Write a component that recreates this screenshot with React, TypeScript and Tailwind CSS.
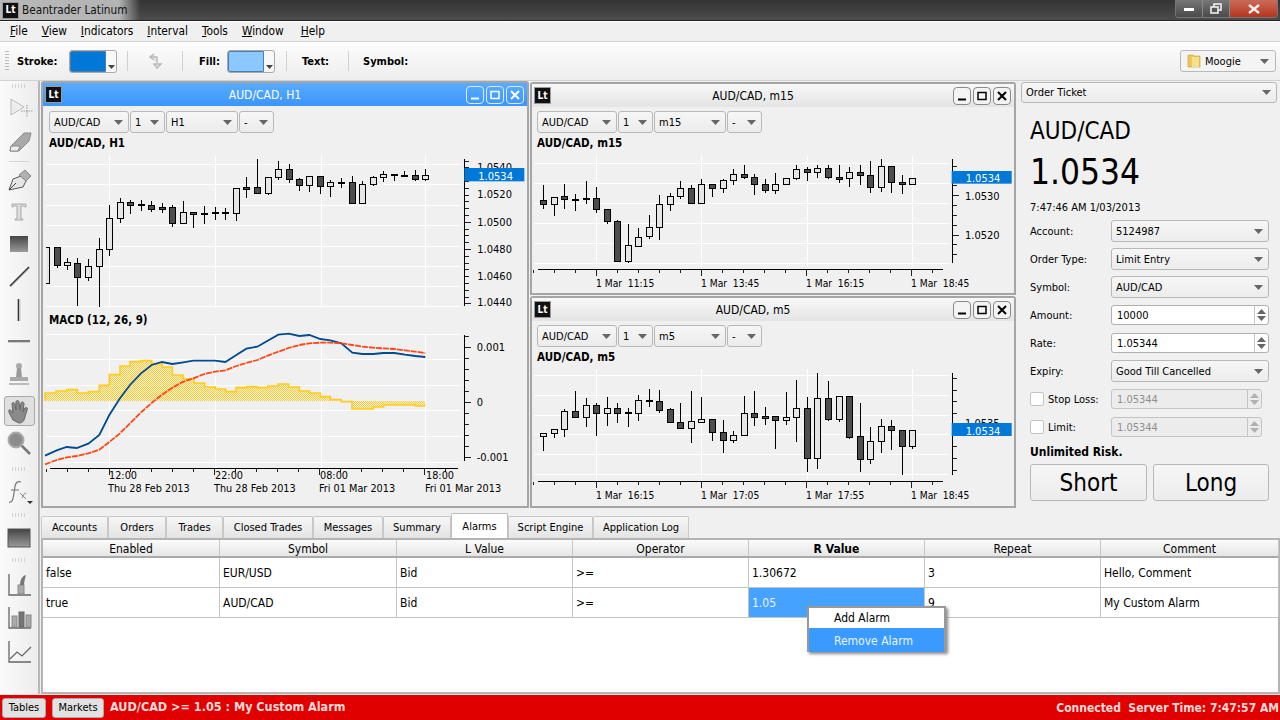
import type { ReactNode } from "react";

type Candle = [number, number, number, number, number, number];

// candle values are [x, high, low, bodyTop, bodyBottom, dark] in 3x chart units
const h1Candles: Candle[] = [
  [50, 292, 350, 292, 344, 1], [82, 322, 358, 337, 344, 0], [112, 322, 464, 338, 382, 1], [145, 324, 390, 347, 382, 0],
  [178, 262, 468, 296, 347, 0], [208, 163, 315, 203, 296, 0], [241, 142, 215, 157, 203, 0], [271, 147, 188, 157, 166, 1],
  [304, 148, 181, 163, 166, 1], [334, 150, 182, 164, 176, 1], [367, 156, 186, 172, 176, 1], [397, 163, 227, 172, 220, 1],
  [430, 150, 220, 187, 220, 0], [460, 183, 230, 187, 193, 1], [493, 166, 218, 190, 193, 1], [525, 168, 206, 187, 190, 1],
  [556, 170, 206, 187, 190, 1], [589, 115, 210, 115, 190, 0], [619, 78, 140, 112, 116, 1], [652, 24, 128, 112, 128, 1],
  [683, 78, 131, 82, 128, 0], [715, 30, 88, 58, 82, 0], [746, 40, 95, 58, 88, 1], [778, 80, 120, 88, 106, 1],
  [808, 76, 122, 79, 106, 0], [841, 78, 128, 79, 109, 1], [871, 88, 137, 97, 109, 0], [904, 82, 110, 96, 99, 1],
  [937, 75, 160, 97, 160, 1], [967, 90, 160, 103, 160, 0], [1000, 76, 106, 82, 103, 0], [1030, 60, 92, 73, 82, 0],
  [1063, 70, 90, 72, 76, 1], [1093, 60, 78, 76, 77, 1], [1126, 58, 90, 76, 86, 1], [1156, 55, 90, 76, 86, 0],
];

const m15Candles: Candle[] = [
  [40, 312, 383, 361, 373, 1], [73, 350, 405, 350, 373, 0], [103, 309, 383, 349, 358, 1], [136, 340, 390, 357, 358, 1],
  [169, 300, 368, 355, 358, 1], [199, 318, 395, 355, 388, 1], [232, 388, 428, 388, 424, 1], [262, 418, 542, 424, 542, 1],
  [295, 430, 545, 496, 542, 0], [325, 442, 497, 470, 497, 0], [358, 403, 475, 442, 469, 0], [388, 343, 476, 373, 442, 0],
  [421, 337, 390, 349, 373, 0], [451, 300, 353, 325, 349, 0], [484, 313, 368, 325, 368, 1], [514, 295, 368, 313, 368, 0],
  [547, 313, 348, 313, 325, 1], [580, 295, 335, 301, 325, 0], [610, 265, 312, 283, 301, 0], [643, 252, 295, 283, 292, 1],
  [673, 280, 342, 292, 313, 1], [706, 294, 335, 313, 331, 1], [736, 277, 338, 313, 331, 0], [769, 290, 313, 295, 313, 0],
  [799, 253, 298, 268, 295, 0], [832, 258, 300, 268, 277, 1], [862, 253, 290, 265, 277, 0], [895, 253, 295, 265, 292, 1],
  [928, 252, 305, 292, 296, 1], [958, 258, 318, 277, 295, 0], [991, 252, 312, 277, 286, 1], [1021, 240, 335, 286, 322, 1],
  [1054, 235, 332, 259, 322, 0], [1084, 259, 335, 259, 307, 1], [1117, 283, 338, 307, 313, 1], [1147, 295, 313, 295, 313, 0],
];

const m5Candles: Candle[] = [
  [40, 415, 465, 415, 424, 0], [73, 400, 426, 403, 415, 0], [103, 340, 422, 349, 403, 0], [136, 285, 365, 349, 365, 1],
  [169, 307, 392, 331, 365, 0], [199, 322, 420, 331, 353, 1], [232, 304, 390, 340, 353, 0], [262, 322, 382, 340, 353, 1],
  [295, 335, 392, 352, 355, 1], [325, 297, 375, 316, 355, 0], [358, 280, 332, 316, 319, 1], [388, 282, 350, 319, 344, 1],
  [421, 335, 382, 343, 382, 1], [451, 322, 400, 382, 400, 1], [484, 285, 440, 379, 400, 0], [514, 304, 380, 373, 380, 0],
  [547, 373, 434, 373, 412, 1], [580, 372, 470, 412, 436, 1], [610, 405, 440, 421, 436, 0], [643, 300, 421, 355, 421, 0],
  [673, 285, 390, 355, 367, 1], [706, 333, 386, 364, 368, 1], [736, 364, 458, 364, 376, 1], [769, 288, 386, 367, 376, 0],
  [799, 252, 437, 340, 367, 0], [832, 304, 527, 340, 488, 1], [862, 231, 518, 310, 488, 0], [895, 255, 376, 310, 373, 1],
  [928, 300, 378, 304, 373, 0], [958, 304, 428, 304, 425, 1], [991, 321, 528, 424, 493, 1], [1021, 393, 505, 439, 493, 0],
  [1054, 369, 470, 394, 439, 0], [1084, 373, 462, 394, 406, 1], [1117, 406, 536, 406, 454, 1], [1147, 406, 460, 406, 454, 0],
];

const histogram = [
  [15, 264], [48, 258], [80, 254], [112, 264], [145, 260], [178, 241], [208, 209], [240, 183], [270, 170], [303, 167],
  [335, 176], [366, 186], [397, 210], [430, 222], [462, 234], [494, 246], [526, 252], [557, 260], [588, 248], [620, 245],
  [652, 248], [683, 243], [715, 237], [746, 246], [778, 258], [809, 264], [841, 275], [871, 284], [904, 290], [936, 312],
  [967, 312], [1000, 306], [1031, 300], [1063, 300], [1095, 300], [1126, 303],
];

const macdLine = [
  [15, 452], [50, 436], [80, 426], [110, 429], [145, 416], [178, 390], [208, 330], [240, 280], [270, 240], [303, 205],
  [335, 180], [366, 171], [397, 177], [430, 172], [460, 167], [493, 167], [525, 167], [556, 171], [589, 150], [619, 131],
  [652, 125], [683, 107], [715, 89], [746, 86], [778, 93], [808, 90], [841, 102], [871, 106], [904, 115], [937, 143],
  [967, 147], [1000, 147], [1030, 144], [1063, 144], [1095, 149], [1126, 153], [1156, 156],
];

const signalLine = [
  [15, 478], [50, 465], [80, 457], [110, 453], [145, 445], [178, 434], [208, 411], [240, 385], [270, 355], [303, 322],
  [335, 294], [366, 269], [397, 248], [430, 230], [460, 220], [493, 207], [525, 200], [556, 196], [589, 183], [619, 174],
  [652, 165], [683, 152], [715, 140], [746, 129], [778, 120], [808, 115], [841, 113], [871, 113], [904, 115], [937, 120],
  [967, 125], [1000, 128], [1030, 130], [1063, 132], [1095, 136], [1126, 140], [1156, 144],
];

const range = (from: number, step: number, count: number) => Array.from({ length: count }, (_, i) => from + i * step);
const snap = (v: number) => Math.round(v) + 0.5;

function Candles({ data, ox, oy }: { data: Candle[]; ox: number; oy: number }) {
  return (
    <g shapeRendering="crispEdges">
      {data.map(([x, hi, lo, top, bot, dark]) => {
        const cx = snap(x / 3 + ox);
        const t = snap(top / 3 + oy);
        const b = Math.max(snap(bot / 3 + oy), t + 1);
        return (
          <g key={x}>
            <line x1={cx} x2={cx} y1={snap(hi / 3 + oy)} y2={snap(lo / 3 + oy)} stroke="#000" />
            <rect x={cx - 3} y={t} width={6} height={b - t} fill={dark ? "#4d4d4d" : "#e6e6e6"} stroke="#000" />
          </g>
        );
      })}
    </g>
  );
}

type ChartProps = {
  width: number;
  height: number;
  ox: number;
  oy: number;
  gridY: number[];
  gridX: number[];
  gridLeft: number;
  gridRight: number;
  gridTop: number;
  gridBottom: number;
  axisTop: number;
  axisBottom: number;
  axisX: number;
  ticks: number[];
  majors: number[];
  labels: [string, number][];
  labelX: number;
  badge?: number[];
  bottom?: { y: number; left: number; right: number; ticks: number[]; majors: number[] };
  children?: ReactNode;
};

function Chart(p: ChartProps) {
  const X = (v: number) => snap(v / 3 + p.ox);
  const Y = (v: number) => snap(v / 3 + p.oy);
  return (
    <svg width={p.width} height={p.height} className="block shrink-0 overflow-visible text-[11px] fill-black">
      <g shapeRendering="crispEdges">
        {p.gridY.map((y) => (
          <line key={y} x1={X(p.gridLeft)} x2={X(p.gridRight)} y1={Y(y)} y2={Y(y)} stroke="#fff" />
        ))}
        {p.gridX.map((x) => (
          <line key={x} x1={X(x)} x2={X(x)} y1={Y(p.gridTop)} y2={Y(p.gridBottom)} stroke="#fff" />
        ))}
        <line x1={X(p.axisX)} x2={X(p.axisX)} y1={Y(p.axisTop)} y2={Y(p.axisBottom)} stroke="#000" />
        {p.ticks.map((y) => (
          <line key={y} x1={X(p.axisX)} x2={X(p.axisX) + (p.majors.includes(y) ? 6 : 4)} y1={Y(y)} y2={Y(y)} stroke="#222" />
        ))}
        {p.bottom && (
          <>
            <line x1={X(p.bottom.left)} x2={X(p.bottom.right)} y1={Y(p.bottom.y)} y2={Y(p.bottom.y)} stroke="#000" />
            {p.bottom.ticks.map((x) => (
              <line key={x} x1={X(x)} x2={X(x)} y1={Y(p.bottom!.y)} y2={Y(p.bottom!.y) + (p.bottom!.majors.includes(x) ? 6 : 3)} stroke="#222" />
            ))}
          </>
        )}
      </g>
      {p.children}
      {p.labels.map(([text, y]) => (
        <text key={text} x={p.labelX / 3 + p.ox} y={y / 3 + p.oy + 4}>
          {text}
        </text>
      ))}
      {p.badge && (
        <>
          <rect x={p.axisX / 3 + p.ox} y={p.badge[0] / 3 + p.oy} width={60} height={(p.badge[1] - p.badge[0]) / 3} fill="#0078d7" />
          <text x={p.axisX / 3 + p.ox + 14} y={(p.badge[0] + p.badge[1]) / 6 + p.oy + 5} fill="#fff">
            1.0534
          </text>
        </>
      )}
    </svg>
  );
}

function Caret({ className = "fill-[#666]" }: { className?: string }) {
  return (
    <svg width="9" height="5" viewBox="0 0 9 5" className={className}>
      <polygon points="0,0 9,0 4.5,5" />
    </svg>
  );
}

function Combo({ label, className }: { label: string; className: string }) {
  return (
    <div className={`flex items-center justify-between rounded-[3px] border border-[#b8b8b8] bg-linear-to-b from-[#f6f6f6] to-[#ececec] pl-[4px] pr-[5px] text-[11px] ${className}`}>
      <span>{label}</span>
      <Caret />
    </div>
  );
}

function Lt() {
  return (
    <div className="flex h-[17px] w-[17px] shrink-0 items-center justify-center border border-[#9a9a9a] bg-[#111] text-[10px] font-bold text-white">
      Lt
    </div>
  );
}

function WinButton({ kind, active }: { kind: "min" | "max" | "close"; active: boolean }) {
  return (
    <div className={`flex h-[18px] w-[18px] items-center justify-center rounded-[4px] border ${active ? "border-[#dbecff] text-white" : "border-[#8a8a8a] bg-[#f4f4f4] text-black"}`}>
      <svg width="10" height="10" viewBox="0 0 10 10" fill="none" stroke="currentColor" strokeWidth="2">
        {kind === "min" && <line x1="1" x2="9" y1="8.5" y2="8.5" />}
        {kind === "max" && <rect x="1" y="1.5" width="8" height="7" strokeWidth="1.5" />}
        {kind === "close" && <path d="M1 1 9 9M9 1 1 9" />}
      </svg>
    </div>
  );
}

function SubWindow({ title, period, active, className, children }: { title: string; period: string; active?: boolean; className: string; children: ReactNode }) {
  return (
    <div className={`flex flex-col rounded-t-[3px] border-2 border-[#a5a5a5] bg-[#f0f0f0] ${className}`}>
      <div className={`flex h-[23px] shrink-0 items-center gap-[2px] pl-[2px] pr-[3px] ${active ? "bg-linear-to-b from-[#58acff] to-[#3b95fb] text-white" : "bg-linear-to-b from-[#f8f8f8] to-[#e4e4e4]"}`}>
        <Lt />
        <span className="flex-1 pl-[2px] text-center text-[12px]">{title}</span>
        <WinButton kind="min" active={!!active} />
        <WinButton kind="max" active={!!active} />
        <WinButton kind="close" active={!!active} />
      </div>
      <div className={`flex h-[22px] shrink-0 gap-px ${active ? "mt-[5px] pl-[6px]" : "mt-[4px] pl-[5px]"}`}>
        <Combo label="AUD/CAD" className="w-[80px]" />
        <Combo label="1" className="w-[35px]" />
        <Combo label={period} className="w-[72px]" />
        <Combo label="-" className="w-[35px]" />
      </div>
      <div className={`flex h-[19px] shrink-0 items-center pt-[2px] text-[11.5px] font-bold ${active ? "pl-[6px]" : "pl-[5px]"}`}>{title}</div>
      {children}
    </div>
  );
}

function Grip() {
  return <div className="h-[4px] w-[16px] bg-[radial-gradient(#b4b4b4_0.7px,transparent_0.8px)] bg-size-[3px_2px]" />;
}

function Field({ label, children }: { label: string; children: ReactNode }) {
  return (
    <div className="flex h-[28px] items-center text-[11px]">
      <span className="w-[81px]">{label}</span>
      {children}
    </div>
  );
}

function Spin({ value, disabled }: { value: string; disabled?: boolean }) {
  return (
    <div className={`flex h-[20px] items-center justify-between rounded-[3px] border pl-[5px] text-[11px] ${disabled ? "w-[151px] border-[#c4c4c4] bg-[#ececec] text-[#8e8e8e]" : "w-[158px] border-[#b0b0b0] bg-white"}`}>
      <span>{value}</span>
      <div className="flex h-full w-[14px] flex-col items-center justify-center gap-[2px] border-l border-[#c4c4c4]">
        <Caret className={`rotate-180 ${disabled ? "fill-[#b0b0b0]" : "fill-[#666]"}`} />
        <Caret className={disabled ? "fill-[#b0b0b0]" : "fill-[#666]"} />
      </div>
    </div>
  );
}

function Swatch({ color }: { color: string }) {
  return (
    <div className="flex h-[23px] w-[48px] items-stretch rounded-[3px] border border-[#a8a8a8] bg-[#f8f8f8]">
      <div className={`w-[36px] rounded-l-[2px] border border-[#4f7fa8] ${color}`} />
      <div className="flex flex-1 items-end justify-center pb-[3px]">
        <svg width="7" height="4" viewBox="0 0 7 4" className="fill-[#444]">
          <polygon points="0,0 7,0 3.5,4" />
        </svg>
      </div>
    </div>
  );
}

const Sep = ({ className }: { className: string }) => <div className={`h-[20px] w-px bg-[#d0d0d0] ${className}`} />;

function Tool({ className, children }: { className: string; children: ReactNode }) {
  return (
    <div className={`flex w-full shrink-0 items-center justify-center ${className}`}>
      <svg width="30" height="30" viewBox="0 0 30 30">
        {children}
      </svg>
    </div>
  );
}

function LeftToolbar() {
  return (
    <div className="flex w-[40px] shrink-0 flex-col items-center border-r-2 border-[#b8b8b8] bg-linear-to-r from-[#fbfbfb] to-[#ececec]">
      <div className="flex h-[10px] shrink-0 items-center"><Grip /></div>
      <Tool className="h-[33px]">
        <path d="M7 6 20 14 7 22Z" fill="#eee" stroke="#bbb" />
        <path d="M23 12v12M17 18h12" stroke="#999" strokeDasharray="1.5 1" />
      </Tool>
      <Tool className="h-[34px]">
        <path d="M9 18 20 7h7l-2 8-10 10H6l1-5Z" fill="#aaa" stroke="#8a8a8a" />
        <path d="M7 20h9l-2 5H6Z" fill="#eee" stroke="#888" />
      </Tool>
      <div className="flex h-[6px] w-[20px] shrink-0 items-center"><div className="h-px w-full bg-[#d4d4d4]" /></div>
      <Tool className="h-[32px]">
        <path d="M5 25 9 14l8-3 5 5-3 6Z" fill="#e6e6e6" stroke="#555" />
        <path d="M15 10 21 5l6 6-5 5Z" fill="#b0b0b0" stroke="#888" />
        <path d="M5 25 12 18" stroke="#444" />
      </Tool>
      <Tool className="h-[31px]">
        <path d="M8 7h14v3h-1l-1-1h-3v13h2v1h-8v-1h2V9h-3l-1 1H8Z" fill="#ddd" stroke="#aaa" />
      </Tool>
      <Tool className="h-[33px]">
        <defs>
          <linearGradient id="gr" x1="0" y1="0" x2="0" y2="1">
            <stop offset="0" stopColor="#454545" />
            <stop offset="1" stopColor="#9a9a9a" />
          </linearGradient>
        </defs>
        <rect x="6" y="7" width="18" height="16" fill="url(#gr)" />
      </Tool>
      <Tool className="h-[32px]">
        <line x1="6" y1="25" x2="25" y2="6" stroke="#333" strokeWidth="1.6" />
        <line x1="7" y1="26" x2="26" y2="7" stroke="#ccc" />
      </Tool>
      <Tool className="h-[33px]">
        <line x1="14.5" y1="5" x2="14.5" y2="27" stroke="#333" strokeWidth="1.6" />
        <line x1="16" y1="5" x2="16" y2="27" stroke="#ccc" />
      </Tool>
      <Tool className="h-[32px]">
        <line x1="4" y1="15" x2="26" y2="15" stroke="#444" strokeWidth="1.4" />
        <line x1="4" y1="16.5" x2="26" y2="16.5" stroke="#ccc" />
      </Tool>
      <Tool className="h-[34px]">
        <circle cx="15" cy="7" r="3" fill="#aaa" />
        <path d="M13 9h4l1 9h-6Z" fill="#999" />
        <rect x="6" y="18" width="18" height="4" fill="#aaa" />
        <rect x="5" y="24" width="20" height="2" fill="#bbb" />
      </Tool>
      <div className="mb-[1px] mt-[5px] flex h-[30px] w-[31px] shrink-0 items-center justify-center rounded-[3px] border border-[#aaa] bg-[#e0e0e0]">
        <svg width="26" height="26" viewBox="0 0 26 26">
          <path d="M7 22C5 18 2 14 3 12c2-1 3 2 4 3L6 6c0-2 2-2 3 0l1 6 0-8c0-2 3-2 3 0l1 8 1-7c1-2 3-1 3 1l-1 8 2-4c2-1 3 0 2 2l-3 10c-1 2-3 3-5 3Z" fill="#8a8a8a" stroke="#666" />
        </svg>
      </div>
      <Tool className="h-[32px]">
        <line x1="17" y1="17" x2="26" y2="26" stroke="#777" strokeWidth="2.5" />
        <circle cx="12" cy="12" r="7.5" fill="#8c8c8c" stroke="#aaa" strokeWidth="2" />
      </Tool>
      <div className="flex h-[19px] shrink-0 items-center"><Grip /></div>
      <Tool className="h-[25px]">
        <path d="M5 26c3 1 4-2 5-9l1-7c1-4 3-5 6-4M7 14h8" fill="none" stroke="#777" strokeWidth="1.2" />
        <path d="M16 17l6 6M22 17c-2 0-2 2-4 5" fill="none" stroke="#888" />
        <polygon points="23,25 29,25 26,28" fill="#333" />
      </Tool>
      <div className="flex h-[24px] shrink-0 items-center"><Grip /></div>
      <Tool className="h-[24px]">
        <rect x="4" y="5" width="22" height="18" fill="url(#gr)" stroke="#555" />
      </Tool>
      <div className="flex h-[18px] shrink-0 items-center"><Grip /></div>
      <Tool className="h-[32px]">
        <path d="M5 4v21h22" fill="none" stroke="#666" strokeWidth="1.3" />
        <rect x="14" y="15" width="6" height="9" fill="#aaa" stroke="#888" />
        <path d="M16 15c0-5 2-9 6-10-1 4-2 7-2 10Z" fill="#777" />
      </Tool>
      <Tool className="h-[34px]">
        <path d="M5 4v21h22" fill="none" stroke="#666" strokeWidth="1.3" />
        <rect x="8" y="13" width="5" height="11" fill="#aaa" stroke="#888" />
        <rect x="15" y="9" width="5" height="15" fill="#777" stroke="#666" />
        <rect x="22" y="12" width="5" height="12" fill="#aaa" stroke="#888" />
      </Tool>
      <Tool className="h-[33px]">
        <path d="M5 4v21h22" fill="none" stroke="#666" strokeWidth="1.3" />
        <path d="M6 22 13 15l5 4 9-9" fill="none" stroke="#666" strokeWidth="1.3" />
      </Tool>
    </div>
  );
}

const headers = ["Enabled", "Symbol", "L Value", "Operator", "R Value", "Repeat", "Comment"];
const rows = [
  ["false", "EUR/USD", "Bid", ">=", "1.30672", "3", "Hello, Comment"],
  ["true", "AUD/CAD", "Bid", ">=", "1.05", "9", "My Custom Alarm"],
];
const tabs: [string, string][] = [
  ["Accounts", "w-[67px]"], ["Orders", "w-[58px]"], ["Trades", "w-[57px]"], ["Closed Trades", "w-[90px]"], ["Messages", "w-[70px]"],
  ["Summary", "w-[68px]"], ["Alarms", "w-[57px]"], ["Script Engine", "w-[85px]"], ["Application Log", "w-[96px]"],
];

export default function App() {
  return (
    <div className="relative flex h-[720px] w-[1280px] flex-col overflow-hidden bg-[#f0f0f0] font-['DejaVu_Sans_Condensed','Noto_Sans',sans-serif] text-[12px] leading-none text-black">
      {/* title bar */}
      <div className="flex h-[21px] shrink-0 items-start justify-between border-b border-[#222] bg-linear-to-b from-[#343434] to-[#4c4c4c]">
        <div className="flex h-[20px] w-[140px] items-center gap-[3px] bg-linear-to-r from-[#b8b8b8] via-[#b4b4b4] via-85% to-transparent pl-[2px]">
          <Lt />
          <span className="pt-px text-[11.7px] text-[#111]">Beantrader Latinum</span>
        </div>
        <div className="mr-[2px] flex h-[18px] overflow-hidden rounded-b-[4px] border border-t-0 border-[#777]">
          <div className="flex w-[27px] items-center justify-center border-r border-[#888] bg-linear-to-b from-[#777] to-[#4a4a4a]">
            <div className="mt-[2px] h-[3px] w-[10px] bg-white" />
          </div>
          <div className="flex w-[27px] items-center justify-center border-r border-[#888] bg-linear-to-b from-[#777] to-[#4a4a4a]">
            <svg width="12" height="11" viewBox="0 0 12 11" fill="none" stroke="#eee" strokeWidth="1.6">
              <rect x="4" y="1" width="7" height="6" />
              <rect x="1" y="4" width="7" height="6" fill="#555" />
            </svg>
          </div>
          <div className="flex w-[47px] items-center justify-center bg-linear-to-b from-[#c96a58] to-[#b8321c]">
            <svg width="12" height="10" viewBox="0 0 12 10" stroke="#eee" strokeWidth="2.4">
              <path d="M1 1 11 9M11 1 1 9" />
            </svg>
          </div>
        </div>
      </div>

      {/* menu */}
      <div className="flex h-[20px] shrink-0 items-center gap-[14px] border-t border-white pl-[10px] pt-px text-[11.8px]">
        {["File", "View", "Indicators", "Interval", "Tools", "Window", "Help"].map((m) => (
          <span key={m} className="last:ml-[3px]">
            <span className="underline">{m[0]}</span>
            {m.slice(1)}
          </span>
        ))}
      </div>

      {/* toolbar */}
      <div className="flex h-[40px] shrink-0 items-center border-y border-[#d2d2d2] bg-linear-to-b from-[#fdfdfd] to-[#ededed] pl-[5px] text-[11px] font-bold">
        <div className="h-[22px] w-[4px] bg-[radial-gradient(#bbb_0.7px,transparent_0.8px)] bg-size-[2px_3px]" />
        <span className="ml-[8px] w-[52px]">Stroke:</span>
        <Swatch color="bg-[#0078d7]" />
        <Sep className="ml-[10px]" />
        <svg width="16" height="16" viewBox="0 0 16 16" className="ml-[20px]" fill="none" stroke="#b8b8b8" strokeWidth="1.4">
          <path d="M6 1 2 4l4 3M2 4h7v6M9 15l-3-4h7Z" fill="#e6e6e6" />
        </svg>
        <Sep className="ml-[18px]" />
        <span className="ml-[16px] w-[28px]">Fill:</span>
        <Swatch color="bg-[#8ac8ff]" />
        <Sep className="ml-[11px]" />
        <span className="ml-[15px] w-[46px]">Text:</span>
        <Sep className="" />
        <span className="ml-[14px]">Symbol:</span>
        <div className="ml-auto mr-[4px] flex h-[22px] w-[96px] items-center rounded-[3px] border border-[#b8b8b8] bg-[#f4f4f4] pl-[6px] pr-[6px] font-normal">
          <svg width="14" height="16" viewBox="0 0 14 16" className="shrink-0">
            <path d="M1 2h5l1 1h6v11H1Z" fill="#e8c860" stroke="#c8a030" strokeWidth="0.6" />
            <path d="M5 4h7v10H5Z" fill="#f5e08c" />
          </svg>
          <span className="ml-[4px] flex-1">Moogie</span>
          <Caret />
        </div>
      </div>

      {/* body */}
      <div className="flex min-h-0 flex-1">
        <LeftToolbar />
        <div className="flex min-w-0 flex-1 flex-col pl-px">
          <div className="flex h-[433px] shrink-0">
            <SubWindow title="AUD/CAD, H1" period="H1" active className="h-[427px] w-[488px] shrink-0">
              <Chart
                width={484} height={155} ox={-3} oy={-2}
                gridY={[43, 103, 164, 226, 287, 347, 408, 468]} gridX={[208, 526, 842, 1156]}
                gridLeft={15} gridRight={1260} gridTop={12} gridBottom={470}
                axisTop={25} axisBottom={465} axisX={1273}
                ticks={range(32, 20.4, 22)} majors={[133.99, 215.6, 297.2, 378.8, 460.4]}
                labels={[["1.0540", 52], ["1.0520", 133], ["1.0500", 215], ["1.0480", 296], ["1.0460", 378], ["1.0440", 456]]}
                labelX={1312} badge={[54, 94]}
              >
                <path d="M2.5 95.5H6.5V131.5H2.5" fill="#e6e6e6" stroke="#000" shapeRendering="crispEdges" />
                <Candles data={h1Candles} ox={-3} oy={-2} />
              </Chart>
              <div className="flex h-[20px] shrink-0 items-center pl-[6px] pt-[8px] text-[11.5px] font-bold">MACD (12, 26, 9)</div>
              <Chart
                width={484} height={178} ox={-3} oy={-22}
                gridY={[88, 163, 241, 316, 394, 470]} gridX={[208, 526, 842, 1156]}
                gridLeft={15} gridRight={1260} gridTop={85} gridBottom={490}
                axisTop={88} axisBottom={465} axisX={1273}
                ticks={range(92, 33, 12)} majors={[125, 290, 455]}
                labels={[["0.001", 125], ["0", 290], ["-0.001", 456]]}
                labelX={1310}
                bottom={{ y: 490, left: 28, right: 1250, ticks: range(19, 63, 20), majors: [208, 523, 838, 1153] }}
              >
                <defs>
                  <pattern id="dots" width="2" height="2" patternUnits="userSpaceOnUse">
                    <rect width="1" height="1" fill="#ffcb1f" />
                    <rect x="1" y="1" width="1" height="1" fill="#ffcb1f" />
                  </pattern>
                </defs>
                <path
                  d={`M2 74${histogram.map(([x, y], i) => `H${x / 3 - 3}V${y / 3 - 22}${i === histogram.length - 1 ? "H382.3" : ""}`).join("")}V74Z`}
                  fill="url(#dots)"
                />
                <path
                  d={`M2 74V${histogram[0][1] / 3 - 22}${histogram.map(([x, y]) => `H${x / 3 - 3}V${y / 3 - 22}`).join("")}H382.3`}
                  fill="none" stroke="#ffcb1f" strokeWidth="1.6"
                />
                <polyline points={macdLine.map(([x, y]) => `${x / 3 - 3},${y / 3 - 22}`).join(" ")} fill="none" stroke="#004a8f" strokeWidth="1.8" />
                <polyline points={signalLine.map(([x, y]) => `${x / 3 - 3},${y / 3 - 22}`).join(" ")} fill="none" stroke="#ff4614" strokeWidth="1.8" strokeDasharray="6 1" />
                {[["12:00", "Thu 28 Feb 2013", 65], ["22:00", "Thu 28 Feb 2013", 171], ["08:00", "Fri 01 Mar 2013", 276], ["18:00", "Fri 01 Mar 2013", 382]].map(([a, b, x]) => (
                  <g key={`${a}`} className="text-[10.8px]">
                    <text x={Number(x) + 1} y={152}>{a}</text>
                    <text x={x} y={165}>{b}</text>
                  </g>
                ))}
              </Chart>
            </SubWindow>
            <div className="ml-px mt-px flex w-[486px] shrink-0 flex-col gap-px">
              <SubWindow title="AUD/CAD, m15" period="m15" className="h-[213px] w-full shrink-0">
                <Chart
                  width={482} height={139} ox={-2} oy={-72}
                  gridY={[250, 310, 368, 428, 488, 548]} gridX={[199, 514, 830, 1147]}
                  gridLeft={8} gridRight={1255} gridTop={222} gridBottom={558}
                  axisTop={235} axisBottom={545} axisX={1265}
                  ticks={range(257, 29.5, 10)} majors={[345.5, 463.5]}
                  labels={[["1.0530", 348], ["1.0520", 465]]} labelX={1305} badge={[273, 311]}
                  bottom={{ y: 568, left: 22, right: 1235, ticks: range(10, 63, 20), majors: [199, 514, 829, 1144] }}
                >
                  <Candles data={m15Candles} ox={-2} oy={-72} />
                  {[["1 Mar  11:15", 64], ["1 Mar  13:45", 169], ["1 Mar  16:15", 274], ["1 Mar  18:45", 379]].map(([t, x]) => (
                    <text key={t} x={x} y={135} className="whitespace-pre text-[10.2px]">{t}</text>
                  ))}
                </Chart>
              </SubWindow>
              <SubWindow title="AUD/CAD, m5" period="m5" className="h-[212px] w-full shrink-0">
                <Chart
                  width={482} height={140} ox={-2} oy={-71}
                  gridY={[241, 301, 360, 418, 478, 538]} gridX={[199, 514, 830, 1147]}
                  gridLeft={8} gridRight={1255} gridTop={220} gridBottom={550}
                  axisTop={232} axisBottom={536} axisX={1265}
                  ticks={[248, 284, 319, 353, 388, 420, 454, 489, 524]} majors={[388]}
                  labels={[["1.0535", 385]]} labelX={1305} badge={[384, 423]}
                  bottom={{ y: 559, left: 22, right: 1235, ticks: range(10, 63, 20), majors: [199, 514, 829, 1144] }}
                >
                  <Candles data={m5Candles} ox={-2} oy={-71} />
                  {[["1 Mar  16:15", 64], ["1 Mar  17:05", 169], ["1 Mar  17:55", 274], ["1 Mar  18:45", 379]].map(([t, x]) => (
                    <text key={t} x={x} y={133} className="whitespace-pre text-[10.2px]">{t}</text>
                  ))}
                </Chart>
              </SubWindow>
            </div>

            {/* order ticket */}
            <div className="ml-[5px] flex w-[258px] flex-col pt-px">
              <Combo label="Order Ticket" className="h-[21px] w-[256px]" />
              <div className="flex flex-col pl-[9px]">
                <div className="mt-[16px] text-[24px]">AUD/CAD</div>
                <div className="mt-[12px] text-[35px]">1.0534</div>
                <div className="mt-[12px] text-[11px]">7:47:46 AM 1/03/2013</div>
                <div className="mt-[4px] flex flex-col">
                  <Field label="Account:"><Combo label="5124987" className="h-[22px] w-[158px]" /></Field>
                  <Field label="Order Type:"><Combo label="Limit Entry" className="h-[22px] w-[158px]" /></Field>
                  <Field label="Symbol:"><Combo label="AUD/CAD" className="h-[22px] w-[158px]" /></Field>
                  <Field label="Amount:"><Spin value="10000" /></Field>
                  <Field label="Rate:"><Spin value="1.05344" /></Field>
                  <Field label="Expiry:"><Combo label="Good Till Cancelled" className="h-[22px] w-[158px]" /></Field>
                  {["Stop Loss:", "Limit:"].map((l) => (
                    <div key={l} className="flex h-[28px] items-center text-[11px]">
                      <div className="h-[14px] w-[14px] rounded-[2px] border border-[#c4c4c4] bg-white" />
                      <span className="ml-[4px] w-[63px]">{l}</span>
                      <Spin value="1.05344" disabled />
                    </div>
                  ))}
                </div>
                <div className="mt-[5px] font-bold">Unlimited Risk.</div>
                <div className="mt-[6px] flex gap-[6px] text-[24px]">
                  <div className="flex h-[37px] w-[117px] items-center justify-center rounded-[3px] border border-[#b8b8b8] bg-linear-to-b from-[#f6f6f6] to-[#ececec]">Short</div>
                  <div className="flex h-[37px] w-[116px] items-center justify-center rounded-[3px] border border-[#b8b8b8] bg-linear-to-b from-[#f6f6f6] to-[#ececec]">Long</div>
                </div>
              </div>
            </div>
          </div>

          {/* tabs */}
          <div className="flex h-[24px] shrink-0 items-end text-[11px]">
            {tabs.map(([t, w]) =>
              t === "Alarms" ? (
                <div key={t} className={`relative z-10 flex h-[25px] items-center justify-center rounded-t-[2px] border border-b-0 border-[#bcbcbc] bg-white ${w}`}>{t}</div>
              ) : (
                <div key={t} className={`flex h-[22px] items-center justify-center rounded-t-[2px] border border-b-0 border-[#c8c8c8] bg-linear-to-b from-[#f6f6f6] to-[#e4e4e4] ${w}`}>{t}</div>
              ),
            )}
          </div>

          {/* alarms table */}
          <div className="relative min-h-0 flex-1 border-2 border-[#b4b4b4] bg-white">
            <div className="grid h-[18px] grid-cols-[177px_177px_176px_176px_176px_176px_178px] border-b-2 border-[#aaa] bg-linear-to-b from-[#fbfbfb] to-[#e6e6e6]">
              {headers.map((h) => (
                <div key={h} className={`flex items-center justify-center border-r border-[#c8c8c8] pt-px ${h === "R Value" ? "font-bold" : ""}`}>{h}</div>
              ))}
            </div>
            {rows.map((r) => (
              <div key={r[0]} className="grid h-[30px] grid-cols-[177px_177px_176px_176px_176px_176px_178px] border-b border-[#c4c4c4]">
                {r.map((c, i) => (
                  <div key={i} className={`flex items-center border-r border-[#c4c4c4] pl-[3px] ${c === "1.05" ? "bg-[#46a2ff] text-[#e8f3ff]" : ""}`}>{c}</div>
                ))}
              </div>
            ))}
            <div className="absolute left-[764px] top-[66px] flex h-[46px] w-[139px] flex-col border-2 border-b-0 border-[#999] bg-white shadow-[2px_2px_3px_#888]">
              <div className="flex h-[20px] items-center pl-[25px]">Add Alarm</div>
              <div className="flex flex-1 items-center bg-[#3b9aff] pl-[25px] pt-px text-[#e8f3ff]">Remove Alarm</div>
            </div>
          </div>
        </div>
      </div>

      {/* status bar */}
      <div className="flex h-[26px] shrink-0 items-center border-t border-[#e8e8e8] bg-[#e00000] pl-[2px] pr-[1px]">
        <div className="flex h-[20px] w-[44px] items-center justify-center rounded-[3px] border border-[#aaa] bg-[#e2e2e2] text-[11px]">Tables</div>
        <div className="ml-[6px] flex h-[20px] w-[52px] items-center justify-center rounded-[3px] border border-[#aaa] bg-[#e2e2e2] text-[11px]">Markets</div>
        <span className="ml-[6px] text-[12.5px] font-bold text-[#ffdcdc]">AUD/CAD &gt;= 1.05 : My Custom Alarm</span>
        <span className="ml-auto whitespace-pre text-[12px] font-bold text-[#ffdcdc]">Connected  Server Time: 7:47:57 AM</span>
      </div>
    </div>
  );
}
